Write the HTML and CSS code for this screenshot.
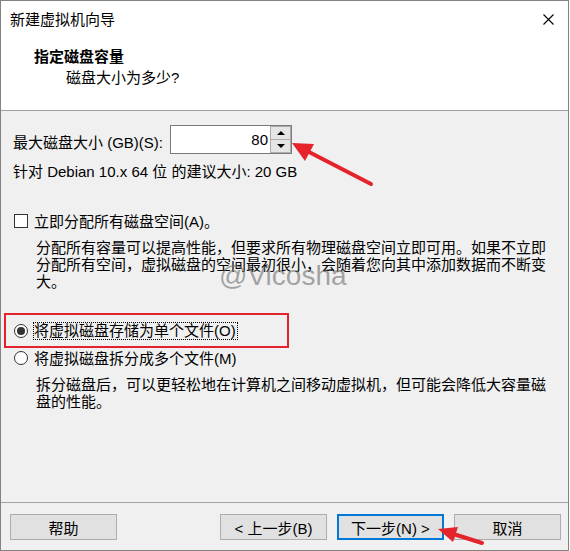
FILE: index.html
```html
<!DOCTYPE html>
<html lang="zh-CN">
<head>

    <meta charset="UTF-8">
    <meta name="viewport" content="width=device-width, initial-scale=1.0">

    <title>新建虚拟机向导</title>

    <link rel="stylesheet" href="styles.css">

</head>
<body>

    <div class="Wizard">

        <div class="TitleBar">
            <span class="Title">新建虚拟机向导</span>
            <svg class="Close" width="11" height="11" viewBox="0 0 11 11">
                <path d="M0.5 0.5 L10.5 10.5 M10.5 0.5 L0.5 10.5" stroke="#000" stroke-width="1.1" fill="none"/>
            </svg>
        </div>

        <div class="Header">
            <div class="Heading">指定磁盘容量</div>
            <div class="SubHeading">磁盘大小为多少?</div>
        </div>

        <div class="Content">

            <div class="SizeRow">
                <span class="SizeLabel">最大磁盘大小 (GB)(S):</span>
                <div class="Spin">
                    <div class="SpinValue">80</div>
                    <div class="SpinButtons">
                        <span class="SpinButton"><i class="Up"></i></span>
                        <span class="SpinButton"><i class="Down"></i></span>
                    </div>
                </div>
            </div>

            <p class="Hint">针对 Debian 10.x 64 位 的建议大小: 20 GB</p>

            <div class="Option OptionCheck">
                <span class="Check"></span>
                <span>立即分配所有磁盘空间(A)。</span>
            </div>

            <p class="Desc">分配所有容量可以提高性能，但要求所有物理磁盘空间立即可用。如果不立即分配所有空间，虚拟磁盘的空间最初很小，会随着您向其中添加数据而不断变大。</p>

            <div class="Option OptionSingle">
                <span class="Radio On"></span>
                <span class="Focus">将虚拟磁盘存储为单个文件(O)</span>
            </div>

            <div class="Option OptionMulti">
                <span class="Radio"></span>
                <span>将虚拟磁盘拆分成多个文件(M)</span>
            </div>

            <p class="Desc">拆分磁盘后，可以更轻松地在计算机之间移动虚拟机，但可能会降低大容量磁盘的性能。</p>

        </div>

        <div class="Footer">
            <button>帮助</button>
            <button class="Back">&lt; 上一步(B)</button>
            <button class="Default">下一步(N) &gt;</button>
            <button>取消</button>
        </div>

        <div class="Watermark">@Vicosha</div>

        <div class="Mark"></div>

        <svg class="Arrows" width="570" height="551" viewBox="0 0 570 551">
            <line x1="371" y1="184" x2="309" y2="152" stroke="#e5232b" stroke-width="4" stroke-linecap="round"/>
            <polygon points="292,143 314,144 305,161" fill="#e5232b"/>
            <line x1="482" y1="543" x2="455" y2="534.5" stroke="#e5232b" stroke-width="4" stroke-linecap="round"/>
            <polygon points="438,529 458,527 453,542" fill="#e5232b"/>
        </svg>

    </div>

</body>
</html>
```

FILE: styles.css
```css
body {
    margin: 0px;
    background: #ffffff;
    font-family: "Liberation Sans", "Noto Sans CJK SC", sans-serif;
    font-size: 15px;
    color: #000000;
}

div.Wizard {
    position: relative;
    width: 569px;
    height: 551px;
    box-sizing: border-box;
    border: 1px solid #838383;
    display: flex;
    flex-direction: column;
    background: #ffffff;
}

div.TitleBar {
    height: 36px;
    display: flex;
    align-items: center;
    justify-content: space-between;
    padding: 0px 14px 0px 9px;
    flex: none;
}

div.TitleBar .Title {
    line-height: 15px;
    margin-top: 1px;
}

div.TitleBar .Close {
    margin-top: 1px;
}

div.Header {
    flex: none;
    padding: 9px 0px 22px 33px;
    line-height: 21px;
    border-bottom: 1px solid #a0a0a0;
}

div.Header .Heading {
    font-weight: bold;
}

div.Header .SubHeading {
    padding-left: 32px;
}

div.Content {
    flex: 1;
    background: #f0f0f0;
    padding: 14px 0px 0px 12px;
}

div.SizeRow {
    display: flex;
    align-items: center;
    height: 29px;
}

div.SizeRow .SizeLabel {
    width: 157px;
    padding-top: 3px;
}

div.Spin {
    width: 122px;
    height: 29px;
    box-sizing: border-box;
    border: 1px solid #7a7a7a;
    background: #ffffff;
    display: flex;
}

div.Spin .SpinValue {
    flex: 1;
    text-align: right;
    line-height: 27px;
    padding-right: 2px;
}

div.Spin .SpinButtons {
    width: 21px;
    display: flex;
    flex-direction: column;
}

div.Spin .SpinButton {
    flex: 1;
    border: 1px solid #acacac;
    background: #e5e5e5;
    display: flex;
    align-items: center;
    justify-content: center;
}

div.Spin .SpinButton + .SpinButton {
    border-top: none;
}

div.Spin .Up {
    border-left: 4px solid transparent;
    border-right: 4px solid transparent;
    border-bottom: 4px solid #000000;
}

div.Spin .Down {
    border-left: 4px solid transparent;
    border-right: 4px solid transparent;
    border-top: 4px solid #000000;
}

p.Hint {
    margin: 9px 0px 0px 0px;
    line-height: 17px;
}

div.Option {
    display: flex;
    align-items: center;
    height: 18px;
    line-height: 17px;
    gap: 6px;
}

div.OptionCheck {
    margin-top: 32px;
}

div.OptionSingle {
    margin-top: 32px;
}

div.OptionMulti {
    margin-top: 9px;
}

span.Check {
    width: 14px;
    height: 14px;
    box-sizing: border-box;
    border: 1px solid #333333;
    background: #ffffff;
    margin-left: 1px;
}

span.Radio {
    width: 14px;
    height: 14px;
    box-sizing: border-box;
    border: 1px solid #333333;
    border-radius: 50%;
    background: #ffffff;
    margin-left: 1px;
    display: flex;
    align-items: center;
    justify-content: center;
}

span.Radio.On::after {
    content: "";
    width: 8px;
    height: 8px;
    border-radius: 50%;
    background: #333333;
}

span.Focus {
    line-height: 16px;
    border: 1px dotted #000000;
    padding: 0px 1px 0px 0px;
    margin-left: -1px;
}

p.Desc {
    margin: 9px 0px 0px 23px;
    line-height: 17px;
    max-width: 515px;
}

div.Footer {
    flex: none;
    border-top: 1px solid #a0a0a0;
    background: #f0f0f0;
    padding: 11px 7px 10px 9px;
    display: flex;
    gap: 10px;
}

div.Footer button {
    width: 107px;
    height: 26px;
    box-sizing: border-box;
    border: 1px solid #adadad;
    background: #e1e1e1;
    font-family: "Liberation Sans", "Noto Sans CJK SC", sans-serif;
    font-size: 15px;
    color: #000000;
    padding: 0px;
}

div.Footer button.Back {
    margin-left: auto;
}

div.Footer button.Default {
    border: 2px solid #0078d7;
}

div.Watermark {
    position: absolute;
    left: 218px;
    top: 261px;
    font-family: "Liberation Sans", sans-serif;
    font-size: 28px;
    line-height: 28px;
    color: rgba(110, 110, 110, 0.6);
    pointer-events: none;
}

div.Mark {
    position: absolute;
    left: 3px;
    top: 312px;
    width: 285px;
    height: 35px;
    box-sizing: border-box;
    border: 2px solid #e3222b;
    pointer-events: none;
}

svg.Arrows {
    position: absolute;
    left: -1px;
    top: -1px;
    pointer-events: none;
}
```
